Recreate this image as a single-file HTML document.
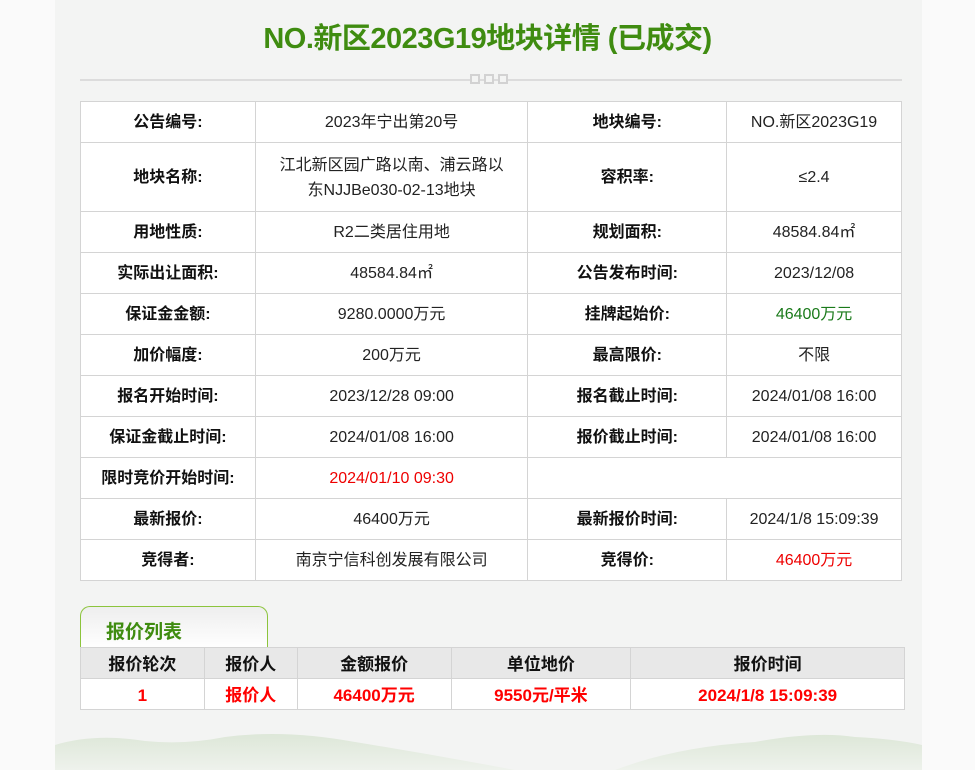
<!DOCTYPE html>
<html><head><meta charset="utf-8"><style>
*{margin:0;padding:0;box-sizing:border-box}
body{width:975px;height:770px;background:#fafafa;font-family:"Liberation Sans","Noto Sans CJK SC",sans-serif;overflow:hidden;position:relative}
.panel{position:absolute;left:55px;top:0;width:867px;height:770px;background:#f3f4f3}
h1{position:absolute;left:0;width:975px;top:19px;text-align:center;font-size:29px;color:#3f8c10;font-weight:bold;line-height:40px;letter-spacing:-0.5px}
.line{position:absolute;left:80px;width:822px;top:79px;height:2px;background:#dcdcdc}
.sq{position:absolute;top:74px;width:10px;height:10px;border:2px solid #d2d2d2;background:#f3f4f3}
table{border-collapse:collapse;position:absolute;background:#fff}
td{border:1px solid #d4d4d4;text-align:center;font-size:16px;color:#222;line-height:20px;padding-top:2px}
td.k{font-weight:bold;color:#111}
.red{color:#e00}.grn{color:#1a7a1a}
#t1{left:80px;top:101px;width:822px}
#t1 td{height:41px}
#t2{left:80px;top:647px;width:825px}
#t2 td{height:31px;font-weight:bold;font-size:17px;padding-top:3px}
#t2 tr:first-child td{background:#e8e8e8;color:#111}
#t2 tr:last-child td{color:#f00}
.tab{position:absolute;left:80px;top:606px;width:188px;height:42px;border:1.5px solid #8cc43c;border-bottom:none;border-radius:10px 10px 0 0;background:linear-gradient(#eee,#fff);font-weight:bold;font-size:19px;color:#3f8c10;padding:10px 0 0 25px}
.hill{position:absolute;left:55px;top:725px;width:867px;height:45px}
</style></head><body>
<div class="panel"></div>
<h1>NO.新区2023G19地块详情 (已成交)</h1>
<div class="line"></div>
<div class="sq" style="left:470px"></div><div class="sq" style="left:484px"></div><div class="sq" style="left:498px"></div>
<table id="t1">
<colgroup><col style="width:175px"><col style="width:273px"><col style="width:199px"><col style="width:175px"></colgroup>
<tr><td class="k">公告编号:</td><td>2023年宁出第20号</td><td class="k">地块编号:</td><td>NO.新区2023G19</td></tr>
<tr><td class="k" style="height:69px">地块名称:</td><td style="line-height:25px">江北新区园广路以南、浦云路以<br>东NJJBe030-02-13地块</td><td class="k">容积率:</td><td>≤2.4</td></tr>
<tr><td class="k">用地性质:</td><td>R2二类居住用地</td><td class="k">规划面积:</td><td>48584.84㎡</td></tr>
<tr><td class="k">实际出让面积:</td><td>48584.84㎡</td><td class="k">公告发布时间:</td><td>2023/12/08</td></tr>
<tr><td class="k">保证金金额:</td><td>9280.0000万元</td><td class="k">挂牌起始价:</td><td class="grn">46400万元</td></tr>
<tr><td class="k">加价幅度:</td><td>200万元</td><td class="k">最高限价:</td><td>不限</td></tr>
<tr><td class="k">报名开始时间:</td><td>2023/12/28 09:00</td><td class="k">报名截止时间:</td><td>2024/01/08 16:00</td></tr>
<tr><td class="k">保证金截止时间:</td><td>2024/01/08 16:00</td><td class="k">报价截止时间:</td><td>2024/01/08 16:00</td></tr>
<tr><td class="k">限时竞价开始时间:</td><td class="red">2024/01/10 09:30</td><td colspan="2"></td></tr>
<tr><td class="k">最新报价:</td><td>46400万元</td><td class="k">最新报价时间:</td><td>2024/1/8 15:09:39</td></tr>
<tr><td class="k">竞得者:</td><td>南京宁信科创发展有限公司</td><td class="k">竞得价:</td><td class="red">46400万元</td></tr>
</table>
<div class="tab">报价列表</div>
<table id="t2">
<colgroup><col style="width:124px"><col style="width:93px"><col style="width:154px"><col style="width:180px"><col style="width:274px"></colgroup>
<tr><td>报价轮次</td><td>报价人</td><td>金额报价</td><td>单位地价</td><td>报价时间</td></tr>
<tr><td>1</td><td>报价人</td><td>46400万元</td><td>9550元/平米</td><td>2024/1/8 15:09:39</td></tr>
</table>
<svg class="hill" viewBox="0 0 867 45" preserveAspectRatio="none">
<defs><linearGradient id="g" x1="0" y1="0" x2="0" y2="1"><stop offset="0" stop-color="#dde7d8"/><stop offset="1" stop-color="#eef2ec"/></linearGradient></defs>
<path d="M0 20 Q40 8 90 16 Q130 20 170 12 Q230 4 300 17 Q380 30 460 45 L0 45Z" fill="url(#g)"/>
<path d="M560 45 Q620 22 700 17 Q760 6 800 12 Q840 14 867 20 L867 45Z" fill="url(#g)"/>
</svg>
</body></html>
